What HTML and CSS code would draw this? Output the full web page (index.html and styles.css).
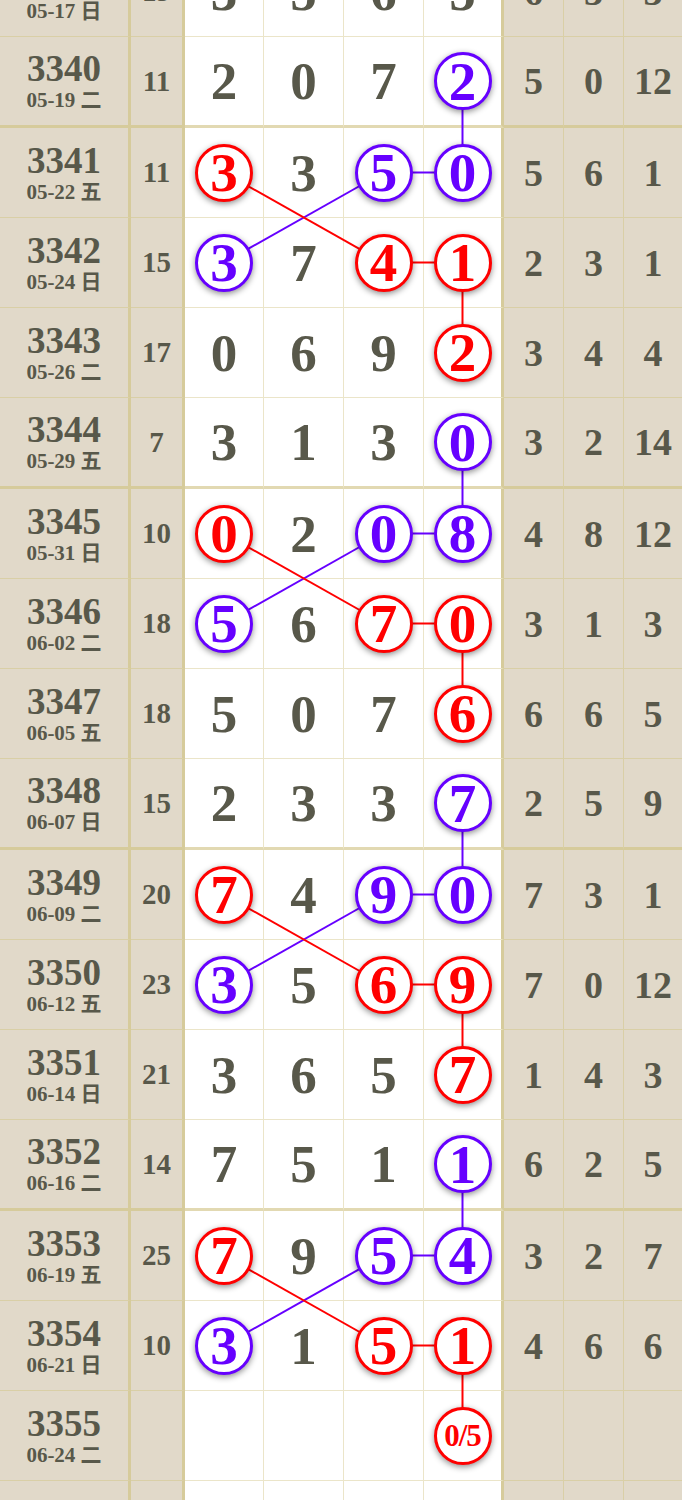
FILE: index.html
```html
<!DOCTYPE html>
<html lang="zh">
<head>
  <meta charset="UTF-8">
  <title>走势图</title>
  <link rel="stylesheet" href="styles.css">
</head>
<body>

  <div class="board">

    <svg class="links" width="682" height="1625" viewBox="0 0 682 1625">
      <g stroke="#6600ff" stroke-width="2">
        <line x1="462.5" y1="134" x2="462.5" y2="225.5"/>
        <line x1="383.5" y1="225.5" x2="462.5" y2="225.5"/>
        <line x1="383.5" y1="225.5" x2="224" y2="315.5"/>
        <line x1="462.5" y1="495" x2="462.5" y2="586.5"/>
        <line x1="383.5" y1="586.5" x2="462.5" y2="586.5"/>
        <line x1="383.5" y1="586.5" x2="224" y2="676.5"/>
        <line x1="462.5" y1="856" x2="462.5" y2="947.5"/>
        <line x1="383.5" y1="947.5" x2="462.5" y2="947.5"/>
        <line x1="383.5" y1="947.5" x2="224" y2="1037.5"/>
        <line x1="462.5" y1="1217" x2="462.5" y2="1308.5"/>
        <line x1="383.5" y1="1308.5" x2="462.5" y2="1308.5"/>
        <line x1="383.5" y1="1308.5" x2="224" y2="1398.5"/>
      </g>
      <g stroke="#ff0000" stroke-width="2">
        <line x1="224" y1="225.5" x2="383.5" y2="315.5"/>
        <line x1="383.5" y1="315.5" x2="462.5" y2="315.5"/>
        <line x1="462.5" y1="315.5" x2="462.5" y2="405.5"/>
        <line x1="224" y1="586.5" x2="383.5" y2="676.5"/>
        <line x1="383.5" y1="676.5" x2="462.5" y2="676.5"/>
        <line x1="462.5" y1="676.5" x2="462.5" y2="766.5"/>
        <line x1="224" y1="947.5" x2="383.5" y2="1037.5"/>
        <line x1="383.5" y1="1037.5" x2="462.5" y2="1037.5"/>
        <line x1="462.5" y1="1037.5" x2="462.5" y2="1127.5"/>
        <line x1="224" y1="1308.5" x2="383.5" y2="1398.5"/>
        <line x1="383.5" y1="1398.5" x2="462.5" y2="1398.5"/>
        <line x1="462.5" y1="1398.5" x2="462.5" y2="1488.5"/>
      </g>
    </svg>

    <div class="row">
      <div class="c issue"><b>3339</b><span>05-17 日</span></div>
      <div class="c sum">19</div>
      <div class="c num">3</div><div class="c num">5</div><div class="c num">6</div><div class="c num last">5</div>
      <div class="c side">6</div><div class="c side">3</div><div class="c side">3</div>
    </div>

    <div class="row end">
      <div class="c issue"><b>3340</b><span>05-19 二</span></div>
      <div class="c sum">11</div>
      <div class="c num">2</div><div class="c num">0</div><div class="c num">7</div>
      <div class="c num last"><span class="ball blue">2</span></div>
      <div class="c side">5</div><div class="c side">0</div><div class="c side">12</div>
    </div>

    <div class="row">
      <div class="c issue"><b>3341</b><span>05-22 五</span></div>
      <div class="c sum">11</div>
      <div class="c num"><span class="ball red">3</span></div><div class="c num">3</div>
      <div class="c num"><span class="ball blue">5</span></div>
      <div class="c num last"><span class="ball blue">0</span></div>
      <div class="c side">5</div><div class="c side">6</div><div class="c side">1</div>
    </div>

    <div class="row">
      <div class="c issue"><b>3342</b><span>05-24 日</span></div>
      <div class="c sum">15</div>
      <div class="c num"><span class="ball blue">3</span></div><div class="c num">7</div>
      <div class="c num"><span class="ball red">4</span></div>
      <div class="c num last"><span class="ball red">1</span></div>
      <div class="c side">2</div><div class="c side">3</div><div class="c side">1</div>
    </div>

    <div class="row">
      <div class="c issue"><b>3343</b><span>05-26 二</span></div>
      <div class="c sum">17</div>
      <div class="c num">0</div><div class="c num">6</div><div class="c num">9</div>
      <div class="c num last"><span class="ball red">2</span></div>
      <div class="c side">3</div><div class="c side">4</div><div class="c side">4</div>
    </div>

    <div class="row end">
      <div class="c issue"><b>3344</b><span>05-29 五</span></div>
      <div class="c sum">7</div>
      <div class="c num">3</div><div class="c num">1</div><div class="c num">3</div>
      <div class="c num last"><span class="ball blue">0</span></div>
      <div class="c side">3</div><div class="c side">2</div><div class="c side">14</div>
    </div>

    <div class="row">
      <div class="c issue"><b>3345</b><span>05-31 日</span></div>
      <div class="c sum">10</div>
      <div class="c num"><span class="ball red">0</span></div><div class="c num">2</div>
      <div class="c num"><span class="ball blue">0</span></div>
      <div class="c num last"><span class="ball blue">8</span></div>
      <div class="c side">4</div><div class="c side">8</div><div class="c side">12</div>
    </div>

    <div class="row">
      <div class="c issue"><b>3346</b><span>06-02 二</span></div>
      <div class="c sum">18</div>
      <div class="c num"><span class="ball blue">5</span></div><div class="c num">6</div>
      <div class="c num"><span class="ball red">7</span></div>
      <div class="c num last"><span class="ball red">0</span></div>
      <div class="c side">3</div><div class="c side">1</div><div class="c side">3</div>
    </div>

    <div class="row">
      <div class="c issue"><b>3347</b><span>06-05 五</span></div>
      <div class="c sum">18</div>
      <div class="c num">5</div><div class="c num">0</div><div class="c num">7</div>
      <div class="c num last"><span class="ball red">6</span></div>
      <div class="c side">6</div><div class="c side">6</div><div class="c side">5</div>
    </div>

    <div class="row end">
      <div class="c issue"><b>3348</b><span>06-07 日</span></div>
      <div class="c sum">15</div>
      <div class="c num">2</div><div class="c num">3</div><div class="c num">3</div>
      <div class="c num last"><span class="ball blue">7</span></div>
      <div class="c side">2</div><div class="c side">5</div><div class="c side">9</div>
    </div>

    <div class="row">
      <div class="c issue"><b>3349</b><span>06-09 二</span></div>
      <div class="c sum">20</div>
      <div class="c num"><span class="ball red">7</span></div><div class="c num">4</div>
      <div class="c num"><span class="ball blue">9</span></div>
      <div class="c num last"><span class="ball blue">0</span></div>
      <div class="c side">7</div><div class="c side">3</div><div class="c side">1</div>
    </div>

    <div class="row">
      <div class="c issue"><b>3350</b><span>06-12 五</span></div>
      <div class="c sum">23</div>
      <div class="c num"><span class="ball blue">3</span></div><div class="c num">5</div>
      <div class="c num"><span class="ball red">6</span></div>
      <div class="c num last"><span class="ball red">9</span></div>
      <div class="c side">7</div><div class="c side">0</div><div class="c side">12</div>
    </div>

    <div class="row">
      <div class="c issue"><b>3351</b><span>06-14 日</span></div>
      <div class="c sum">21</div>
      <div class="c num">3</div><div class="c num">6</div><div class="c num">5</div>
      <div class="c num last"><span class="ball red">7</span></div>
      <div class="c side">1</div><div class="c side">4</div><div class="c side">3</div>
    </div>

    <div class="row end">
      <div class="c issue"><b>3352</b><span>06-16 二</span></div>
      <div class="c sum">14</div>
      <div class="c num">7</div><div class="c num">5</div><div class="c num">1</div>
      <div class="c num last"><span class="ball blue">1</span></div>
      <div class="c side">6</div><div class="c side">2</div><div class="c side">5</div>
    </div>

    <div class="row">
      <div class="c issue"><b>3353</b><span>06-19 五</span></div>
      <div class="c sum">25</div>
      <div class="c num"><span class="ball red">7</span></div><div class="c num">9</div>
      <div class="c num"><span class="ball blue">5</span></div>
      <div class="c num last"><span class="ball blue">4</span></div>
      <div class="c side">3</div><div class="c side">2</div><div class="c side">7</div>
    </div>

    <div class="row">
      <div class="c issue"><b>3354</b><span>06-21 日</span></div>
      <div class="c sum">10</div>
      <div class="c num"><span class="ball blue">3</span></div><div class="c num">1</div>
      <div class="c num"><span class="ball red">5</span></div>
      <div class="c num last"><span class="ball red">1</span></div>
      <div class="c side">4</div><div class="c side">6</div><div class="c side">6</div>
    </div>

    <div class="row">
      <div class="c issue"><b>3355</b><span>06-24 二</span></div>
      <div class="c sum"></div>
      <div class="c num"></div><div class="c num"></div><div class="c num"></div>
      <div class="c num last"><span class="ball red small">0/5</span></div>
      <div class="c side"></div><div class="c side"></div><div class="c side"></div>
    </div>

    <div class="row end">
      <div class="c issue"></div>
      <div class="c sum"></div>
      <div class="c num"></div><div class="c num"></div><div class="c num"></div><div class="c num last"></div>
      <div class="c side"></div><div class="c side"></div><div class="c side"></div>
    </div>

  </div>

</body>
</html>
```

FILE: styles.css
```css
body {
  margin: 0;
  background: #e1d9c9;
  overflow: hidden;
  font-family: "Liberation Serif", "Noto Sans CJK SC", serif;
  font-weight: bold;
  color: #58584a;
}

.board {
  position: relative;
  width: 682px;
  margin-top: -53px;
}

.links {
  position: absolute;
  top: 0;
  left: 0;
  z-index: 1;
}

.row {
  display: grid;
  grid-template-columns: 131px 54px 79px 80px 80px 80px 60px 60px 58px;
  height: 90px;
}

.row.end {
  height: 91px;
}

.c {
  box-sizing: border-box;
  display: flex;
  align-items: center;
  justify-content: center;
  border-bottom: 1px solid #d9cfa6;
  border-right: 1px solid #d9cfa6;
  background: #e1d9c9;
}

.row.end .c {
  border-bottom: 3px solid #d6cb9b;
}

.issue {
  flex-direction: column;
  border-right: 3px solid #d6cb9b;
  padding-top: 2px;
}

.issue b {
  font-size: 37px;
  line-height: 36px;
}

.issue span {
  font-size: 21px;
  line-height: 26px;
}

.sum {
  font-size: 29px;
  border-right: 3px solid #d6cb9b;
}

.num {
  background: #fff;
  font-size: 53px;
  border-bottom-color: #ebe5c9;
  border-right-color: #ebe5c9;
}

.row.end .num {
  border-bottom-color: #e2d9b2;
}

.num.last {
  border-right: 3px solid #d6cb9b;
}

.side {
  font-size: 38px;
}

.side:last-child {
  border-right: none;
}

.ball {
  position: relative;
  z-index: 2;
  box-sizing: border-box;
  width: 58px;
  height: 58px;
  border-radius: 50%;
  border: 3px solid;
  background: #fff;
  display: flex;
  align-items: center;
  justify-content: center;
  font-size: 55px;
  line-height: 1;
  box-shadow: 0 2px 6px rgba(0, 0, 0, 0.45);
}

.red {
  color: #ff0000;
  border-color: #ff0000;
}

.blue {
  color: #6600ff;
  border-color: #6600ff;
}

.ball.small {
  font-size: 31px;
  letter-spacing: -1px;
}
```
